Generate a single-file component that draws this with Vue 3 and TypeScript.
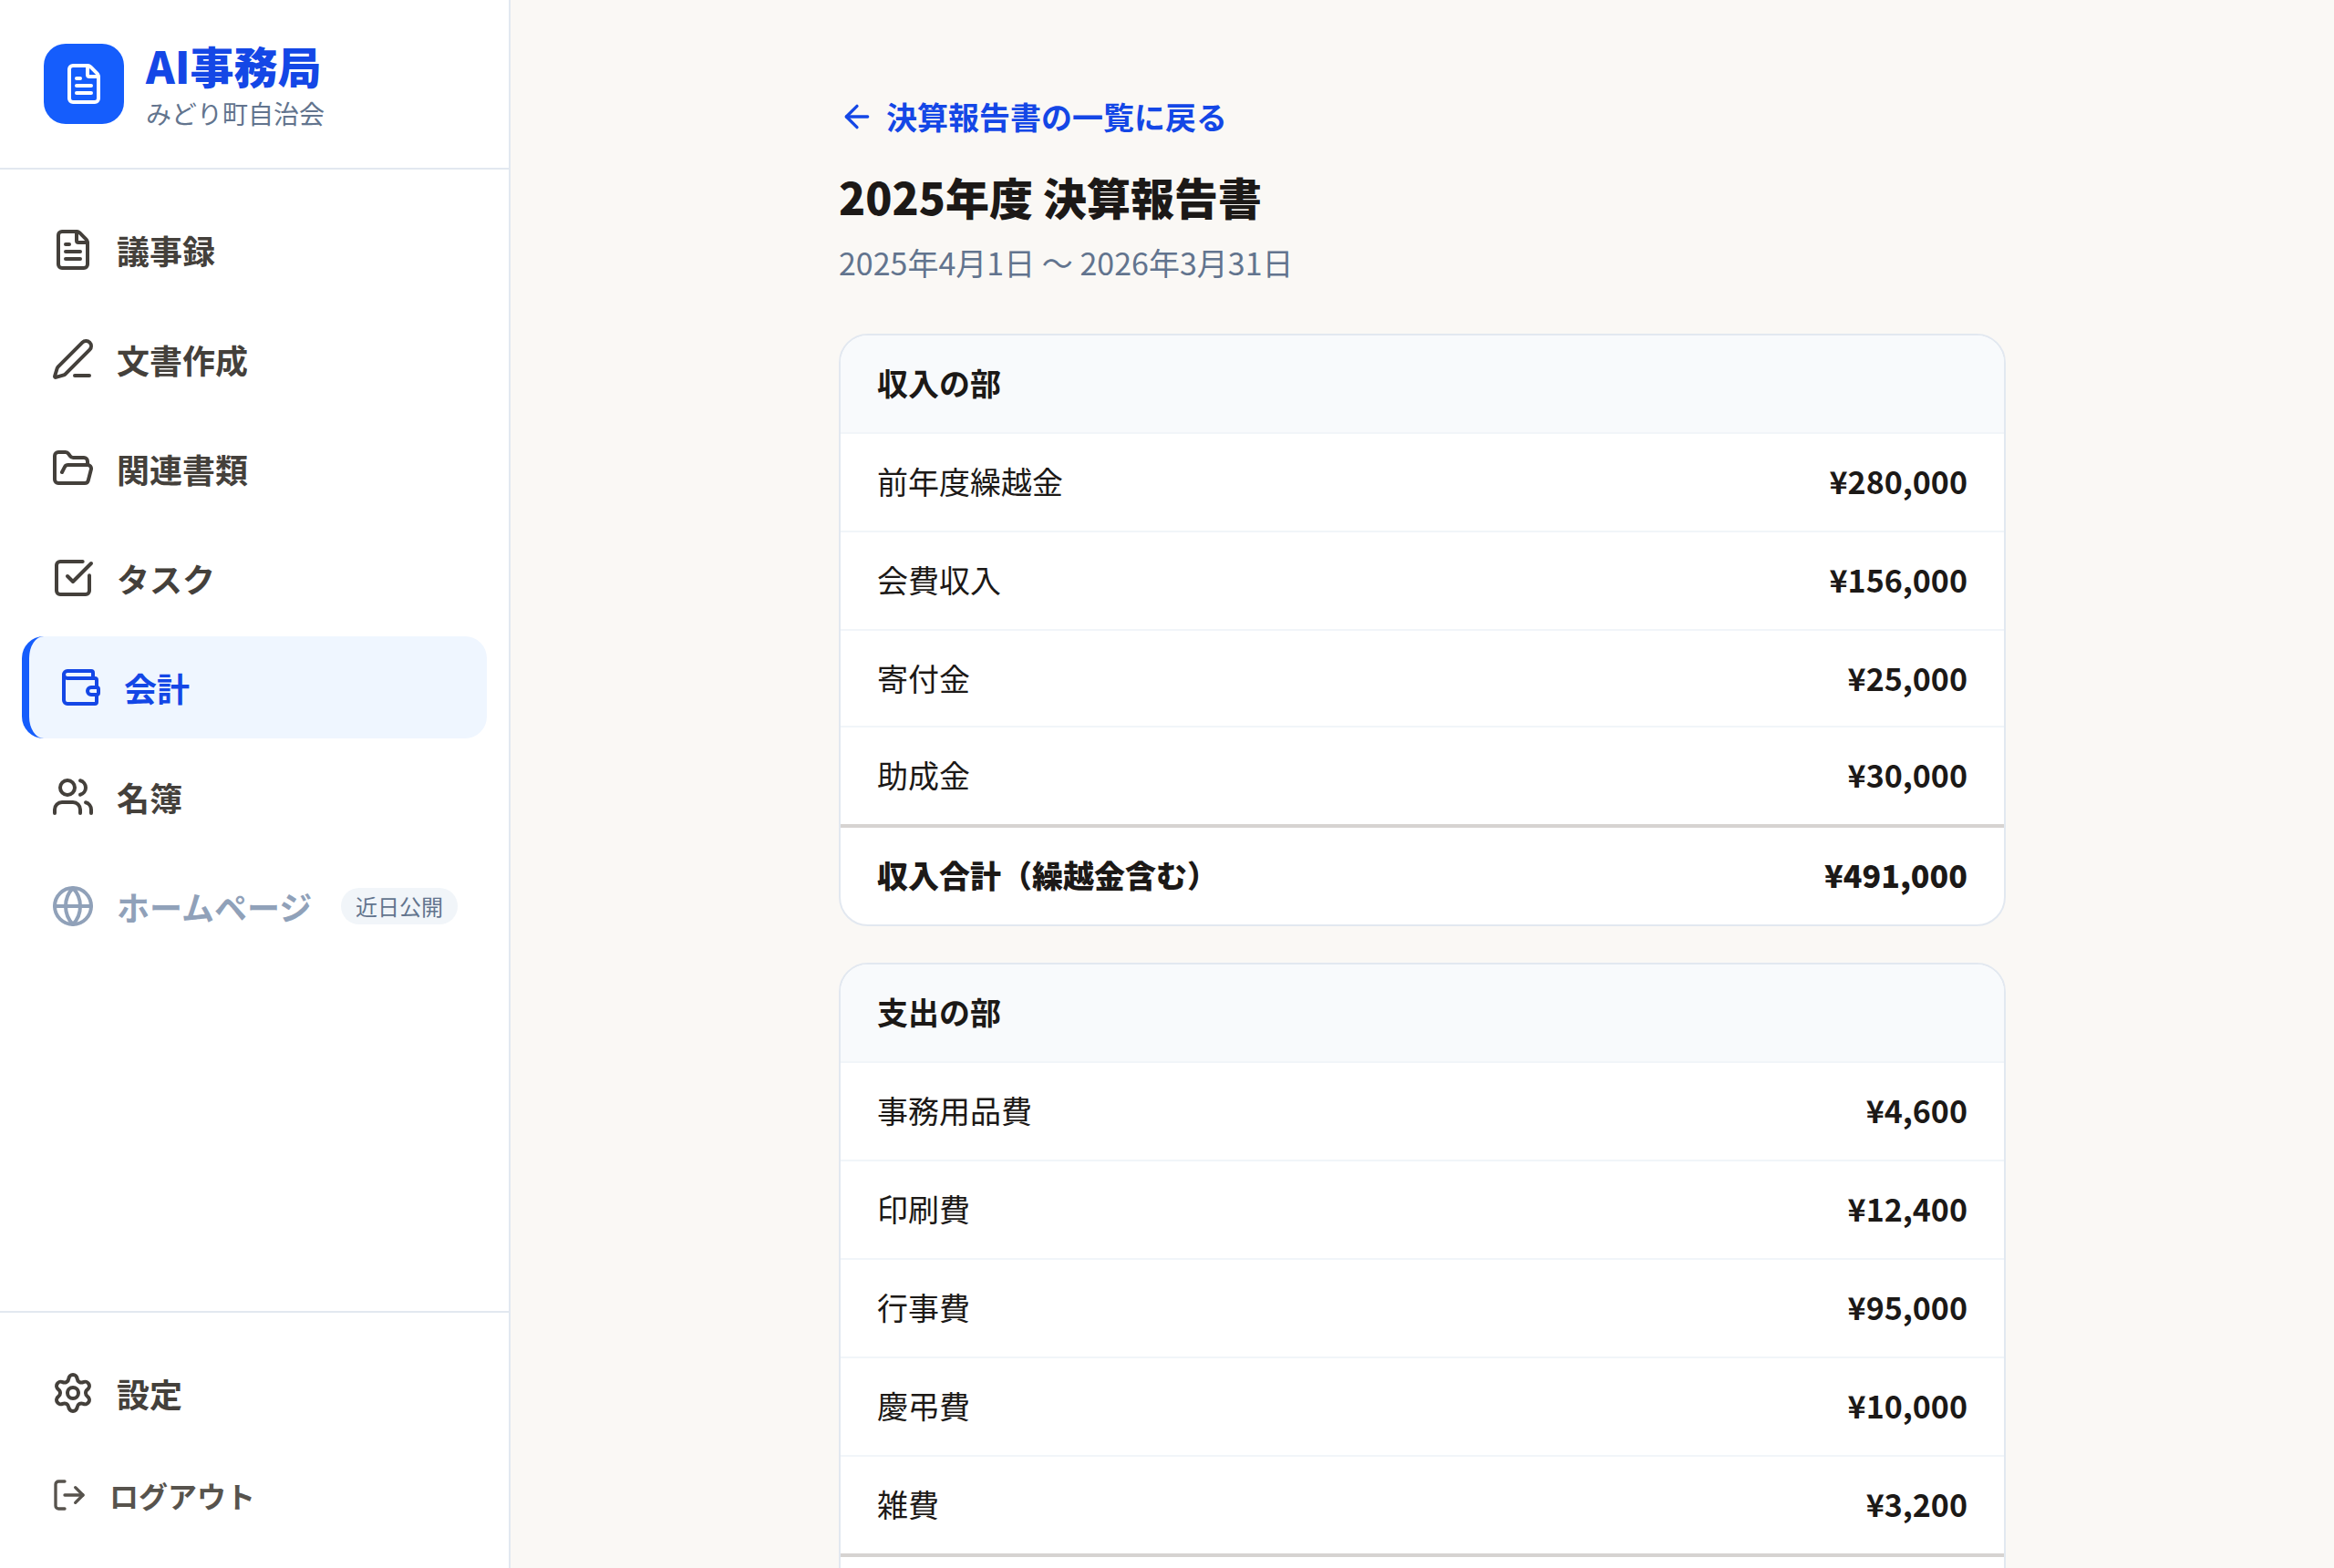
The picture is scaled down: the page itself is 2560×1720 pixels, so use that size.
<script setup lang="ts">
interface NavItem {
  label: string
  icon: string[]
  circle?: [number, number, number]
  active?: boolean
  soon?: boolean
}

interface Row {
  name: string
  amount: string
  compact?: boolean
}

interface Section {
  title: string
  rows: Row[]
  total: Row
}

const fileIcon: string[] = [
  'M6 22a2 2 0 0 1-2-2V4a2 2 0 0 1 2-2h8a2.4 2.4 0 0 1 1.704.706l3.588 3.588A2.4 2.4 0 0 1 20 8v12a2 2 0 0 1-2 2z',
  'M14 2v5a1 1 0 0 0 1 1h5',
  'M10 9H8',
  'M16 13H8',
  'M16 17H8',
]

const nav: NavItem[] = [
  { label: '議事録', icon: fileIcon },
  {
    label: '文書作成',
    icon: [
      'M13 21h8',
      'M21.174 6.812a1 1 0 0 0-3.986-3.987L3.842 16.174a2 2 0 0 0-.5.83l-1.321 4.352a.5.5 0 0 0 .623.622l4.353-1.32a2 2 0 0 0 .83-.497z',
    ],
  },
  {
    label: '関連書類',
    icon: [
      'm6 14 1.5-2.9A2 2 0 0 1 9.24 10H20a2 2 0 0 1 1.94 2.5l-1.54 6a2 2 0 0 1-1.95 1.5H4a2 2 0 0 1-2-2V5a2 2 0 0 1 2-2h3.9a2 2 0 0 1 1.69.9l.81 1.2a2 2 0 0 0 1.67.9H18a2 2 0 0 1 2 2v2',
    ],
  },
  {
    label: 'タスク',
    icon: ['M21 10.656V19a2 2 0 0 1-2 2H5a2 2 0 0 1-2-2V5a2 2 0 0 1 2-2h12.344', 'm9 11 3 3L22 4'],
  },
  {
    label: '会計',
    active: true,
    icon: [
      'M19 7V4a1 1 0 0 0-1-1H5a2 2 0 0 0 0 4h15a1 1 0 0 1 1 1v4h-3a2 2 0 0 0 0 4h3a1 1 0 0 0 1-1v-2a1 1 0 0 0-1-1',
      'M3 5v14a2 2 0 0 0 2 2h15a1 1 0 0 0 1-1v-4',
    ],
  },
  {
    label: '名簿',
    circle: [9, 7, 4],
    icon: ['M16 21v-2a4 4 0 0 0-4-4H6a4 4 0 0 0-4 4v2', 'M16 3.128a4 4 0 0 1 0 7.744', 'M22 21v-2a4 4 0 0 0-3-3.87'],
  },
  {
    label: 'ホームページ',
    soon: true,
    circle: [12, 12, 10],
    icon: ['M12 2a14.5 14.5 0 0 0 0 20 14.5 14.5 0 0 0 0-20', 'M2 12h20'],
  },
]

const sections: Section[] = [
  {
    title: '収入の部',
    rows: [
      { name: '前年度繰越金', amount: '¥280,000' },
      { name: '会費収入', amount: '¥156,000' },
      { name: '寄付金', amount: '¥25,000', compact: true },
      { name: '助成金', amount: '¥30,000' },
    ],
    total: { name: '収入合計（繰越金含む）', amount: '¥491,000' },
  },
  {
    title: '支出の部',
    rows: [
      { name: '事務用品費', amount: '¥4,600' },
      { name: '印刷費', amount: '¥12,400' },
      { name: '行事費', amount: '¥95,000' },
      { name: '慶弔費', amount: '¥10,000' },
      { name: '雑費', amount: '¥3,200' },
    ],
    total: { name: '支出合計', amount: '¥125,200' },
  },
]
</script>

<template>
  <div class="app">
    <aside class="sidebar">
      <header class="brand">
        <div class="logo">
          <svg class="icon" viewBox="0 0 24 24"><path v-for="d in fileIcon" :key="d" :d="d" /></svg>
        </div>
        <div class="brand-text">
          <div class="brand-name">AI事務局</div>
          <div class="brand-org">みどり町自治会</div>
        </div>
      </header>
      <nav class="nav">
        <a v-for="item in nav" :key="item.label" class="item" :class="{ active: item.active, soon: item.soon }">
          <svg class="icon" viewBox="0 0 24 24">
            <circle v-if="item.circle" :cx="item.circle[0]" :cy="item.circle[1]" :r="item.circle[2]" />
            <path v-for="d in item.icon" :key="d" :d="d" />
          </svg>
          <span class="label">{{ item.label }}</span>
          <span v-if="item.soon" class="badge">近日公開</span>
        </a>
      </nav>
      <footer class="foot">
        <a class="item">
          <svg class="icon" viewBox="0 0 24 24">
            <path d="M9.671 4.136a2.34 2.34 0 0 1 4.659 0 2.34 2.34 0 0 0 3.319 1.915 2.34 2.34 0 0 1 2.33 4.033 2.34 2.34 0 0 0 0 3.831 2.34 2.34 0 0 1-2.33 4.033 2.34 2.34 0 0 0-3.319 1.915 2.34 2.34 0 0 1-4.659 0 2.34 2.34 0 0 0-3.32-1.915 2.34 2.34 0 0 1-2.33-4.033 2.34 2.34 0 0 0 0-3.831A2.34 2.34 0 0 1 6.35 6.051a2.34 2.34 0 0 0 3.319-1.915" />
            <circle cx="12" cy="12" r="3" />
          </svg>
          <span class="label">設定</span>
        </a>
        <a class="item logout">
          <svg class="icon small" viewBox="0 0 24 24">
            <path d="m16 17 5-5-5-5" />
            <path d="M21 12H9" />
            <path d="M9 21H5a2 2 0 0 1-2-2V5a2 2 0 0 1 2-2h4" />
          </svg>
          <span class="label">ログアウト</span>
        </a>
      </footer>
    </aside>

    <main class="main">
      <div class="content">
        <a class="back">
          <svg class="icon small" viewBox="0 0 24 24"><path d="m12 19-7-7 7-7" /><path d="M19 12H5" /></svg>
          <span>決算報告書の一覧に戻る</span>
        </a>
        <h1 class="title">2025年度 決算報告書</h1>
        <p class="period">2025年4月1日 〜 2026年3月31日</p>
        <section v-for="s in sections" :key="s.title" class="card">
          <h2 class="card-head">{{ s.title }}</h2>
          <div v-for="r in s.rows" :key="r.name" class="row" :class="{ compact: r.compact }">
            <span>{{ r.name }}</span>
            <span class="amount">{{ r.amount }}</span>
          </div>
          <div class="row total">
            <span>{{ s.total.name }}</span>
            <span>{{ s.total.amount }}</span>
          </div>
        </section>
      </div>
    </main>
  </div>
</template>

<style>
body {
  margin: 0;
  overflow: hidden;
}
</style>

<style scoped>
.app {
  display: flex;
  height: 1720px;
  overflow: hidden;
  background: #faf8f5;
  color: #1c1917;
  font-family: "Noto Sans CJK JP", "Noto Sans", sans-serif;
  font-size: 34px;
  line-height: 58px;
}
.icon {
  flex: none;
  width: 48px;
  height: 48px;
  fill: none;
  stroke: currentColor;
  stroke-width: 2;
  stroke-linecap: round;
  stroke-linejoin: round;
}
.icon.small {
  width: 40px;
  height: 40px;
}
.sidebar {
  box-sizing: border-box;
  flex: none;
  display: flex;
  flex-direction: column;
  width: 560px;
  background: #fff;
  border-right: 2px solid #e2e8f0;
}
.brand {
  box-sizing: border-box;
  display: flex;
  align-items: center;
  gap: 24px;
  height: 186px;
  padding: 0 48px;
  border-bottom: 2px solid #e2e8f0;
}
.logo {
  display: flex;
  align-items: center;
  justify-content: center;
  width: 88px;
  height: 88px;
  border-radius: 24px;
  background: #155dfc;
  color: #fff;
}
.brand-name {
  color: #1447e6;
  font-size: 48px;
  font-weight: 800;
  line-height: 60px;
}
.brand-org {
  margin-bottom: -1px;
  padding-top: 3px;
  color: #62748e;
  font-size: 28px;
  line-height: 40px;
}
.nav {
  flex: 1;
  display: flex;
  flex-direction: column;
  gap: 8px;
  padding: 32px 24px;
}
.item {
  box-sizing: border-box;
  display: flex;
  align-items: center;
  gap: 24px;
  height: 112px;
  padding: 0 32px;
  border-radius: 24px;
  color: #44403b;
  font-size: 36px;
  font-weight: 700;
  line-height: 60px;
}
.item.active {
  border-left: 8px solid #155dfc;
  background: #eff6ff;
  color: #1447e6;
}
.item.soon {
  color: #90a1b9;
}
.badge {
  margin-left: auto;
  padding: 4px 16px;
  border-radius: 20px;
  background: #f1f5f9;
  color: #62748e;
  font-size: 24px;
  font-weight: 400;
  line-height: 32px;
}
.foot {
  display: flex;
  flex-direction: column;
  gap: 8px;
  padding: 32px 24px;
  border-top: 2px solid #e2e8f0;
}
.item.logout {
  height: 96px;
  color: #57534d;
  font-size: 32px;
}
.main {
  flex: 1;
  display: flex;
  justify-content: center;
}
.content {
  width: 1280px;
  padding-top: 80px;
}
.back {
  display: flex;
  align-items: center;
  gap: 12px;
  height: 96px;
  color: #1447e6;
  font-weight: 700;
}
.title {
  margin: 5px 0 0;
  font-size: 48px;
  font-weight: 800;
  line-height: 68px;
}
.period {
  margin: 10px 0 49px;
  color: #62748e;
}
.card {
  margin-bottom: 40px;
  border: 2px solid #e2e8f0;
  border-radius: 32px;
  background: #fff;
  overflow: hidden;
}
.card-head {
  margin: 0;
  padding: 23px 40px 25px;
  border-bottom: 2px solid #f1f5f9;
  background: #f8fafc;
  font-size: 34px;
  font-weight: 700;
}
.row {
  display: flex;
  justify-content: space-between;
  padding: 23px 40px 25px;
  border-bottom: 2px solid #f1f5f9;
}
.row.compact {
  padding-bottom: 23px;
}
.row:nth-last-child(2) {
  border-bottom: 0;
}
.amount {
  font-weight: 700;
}
.row.total {
  border-top: 4px solid #d6d3d1;
  border-bottom: 0;
  font-weight: 800;
}
</style>
